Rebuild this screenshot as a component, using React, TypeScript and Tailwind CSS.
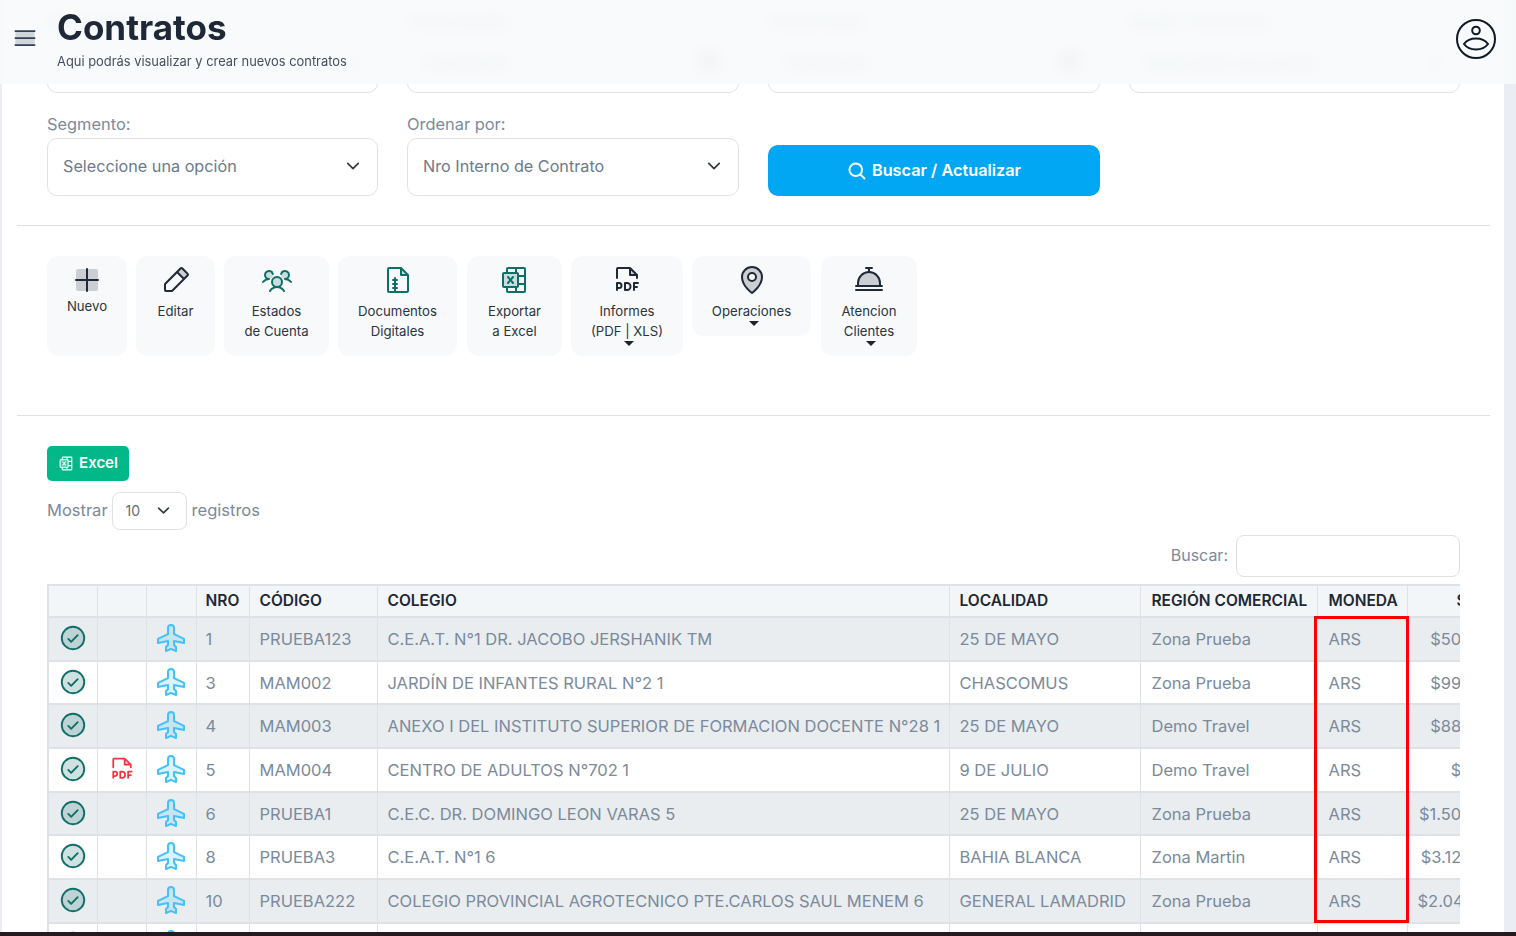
import {
  PiAirplaneDuotone,
  PiCalendarBlankDuotone,
  PiCallBellDuotone,
  PiCheckCircleDuotone,
  PiFileArchiveDuotone,
  PiFilePdfDuotone,
  PiListDuotone,
  PiMagnifyingGlassBold,
  PiMapPinDuotone,
  PiMicrosoftExcelLogoDuotone,
  PiPencilSimpleDuotone,
  PiPlusDuotone,
  PiUsersThreeDuotone,
} from "react-icons/pi";

const rows = [
  { nro: "1", codigo: "PRUEBA123", colegio: "C.E.A.T. N°1 DR. JACOBO JERSHANIK TM", localidad: "25 DE MAYO", region: "Zona Prueba", monto: "$500.000,00" },
  { nro: "3", codigo: "MAM002", colegio: "JARDÍN DE INFANTES RURAL N°2 1", localidad: "CHASCOMUS", region: "Zona Prueba", monto: "$990.000,00" },
  { nro: "4", codigo: "MAM003", colegio: "ANEXO I DEL INSTITUTO SUPERIOR DE FORMACION DOCENTE N°28 1", localidad: "25 DE MAYO", region: "Demo Travel", monto: "$880.000,00" },
  { nro: "5", codigo: "MAM004", colegio: "CENTRO DE ADULTOS N°702 1", localidad: "9 DE JULIO", region: "Demo Travel", monto: "$9.000,00", pdf: true },
  { nro: "6", codigo: "PRUEBA1", colegio: "C.E.C. DR. DOMINGO LEON VARAS 5", localidad: "25 DE MAYO", region: "Zona Prueba", monto: "$1.500.000,00" },
  { nro: "8", codigo: "PRUEBA3", colegio: "C.E.A.T. N°1 6", localidad: "BAHIA BLANCA", region: "Zona Martin", monto: "$3.120.000,00" },
  { nro: "10", codigo: "PRUEBA222", colegio: "COLEGIO PROVINCIAL AGROTECNICO PTE.CARLOS SAUL MENEM 6", localidad: "GENERAL LAMADRID", region: "Zona Prueba", monto: "$2.040.000,00" },
  { nro: "12", codigo: "PRUEBA5", colegio: "ESCUELA DE EDUCACION MEDIA 2", localidad: "25 DE MAYO", region: "Zona Prueba", monto: "$700.000,00" },
];

function Chevron({ className }: { className: string }) {
  return (
    <svg viewBox="0 0 16 16" fill="none" stroke="#343a40" strokeWidth="2" strokeLinecap="round" strokeLinejoin="round" className={className}>
      <path d="M2 5l6 6 6-6" />
    </svg>
  );
}

function Filter({ label, value, calendar }: { label: string; value: string; calendar?: boolean }) {
  return (
    <div>
      <label className="block h-[26px] text-[16.400px] leading-[24px] text-[#7b8a9b]">{label}</label>
      <div className="flex h-[58px] items-center justify-between rounded-[10px] border border-[#dee2e6] bg-white pb-[2px] pl-[15px] pr-[17px] text-[16.200px] text-[#6c7a8b]">
        <span>{value}</span>
        {calendar ? <PiCalendarBlankDuotone className="h-[24px] w-[24px] text-[#1f2937]" /> : <Chevron className="h-[14px] w-[14px]" />}
      </div>
    </div>
  );
}

function Caret({ className }: { className: string }) {
  return <span className={`h-0 w-0 border-x-[5px] border-t-[5px] border-x-transparent border-t-[#212529] ${className}`} />;
}

function ToolButton({ icon, lines, className, labelClass = "mt-[5px]", caret }: { icon: React.ReactNode; lines: string[]; className: string; labelClass?: string; caret?: boolean }) {
  return (
    <div className={`relative flex flex-col items-center rounded-[12px] bg-[#f7f9fb] pt-[8px] text-center text-[13.200px] leading-[20px] text-[#2b3440] ${className}`}>
      <div className="h-[32px] w-[32px] text-[32px]">{icon}</div>
      <div className={labelClass}>
        {lines.map((line) => (
          <div key={line}>{line}</div>
        ))}
      </div>
      {caret && <Caret className="absolute bottom-[10px] left-[calc(50%+2px)] -translate-x-1/2" />}
    </div>
  );
}

export default function App() {
  return (
    <div className="relative flex h-[936px] w-[1516px] flex-col overflow-hidden bg-[#eaeef4] font-['Inter',sans-serif]">
      <header className="absolute left-0 top-0 z-10 flex h-[84px] w-full items-start bg-[#f7f9fb]/90 backdrop-blur-[7px]">
        <PiListDuotone className="ml-[11px] mt-[24px] h-[28px] w-[28px] text-[#334155]" />
        <div className="ml-[18px] flex-1">
          <h1 className="mt-[6px] text-[35px] font-bold leading-[42px] text-[#1e2836]">Contratos</h1>
          <p className="mt-[5px] text-[12.900px] leading-[18px] text-[#46505e]">Aqui podrás visualizar y crear nuevos contratos</p>
        </div>
        <svg viewBox="0 0 40 40" fill="none" stroke="#111827" strokeWidth="2" className="mr-[20px] mt-[19px] h-[40px] w-[40px]">
          <circle cx="20" cy="20" r="19" />
          <circle cx="20" cy="11.500" r="3.800" />
          <path d="M8 25c3-4 7.500-5.500 12-5.500s9 1.500 12 5.500c-3 4-7.500 5.500-12 5.500s-9-1.500-12-5.500z" />
        </svg>
      </header>

      <main className="ml-[2px] w-[1502px] flex-1 overflow-hidden bg-white pl-[15px] pr-[14px] pt-[9px]">
        <div className="px-[30px]">
          <div className="grid grid-cols-[331px_332px_332px_331px] gap-x-[29px] gap-y-[19px]">
            <Filter label="Nro. de Contrato:" value="" />
            <Filter label="Fecha desde:" value="01/01/2024" calendar />
            <Filter label="Fecha hasta:" value="31/12/2024" calendar />
            <Filter label="Región Comercial:" value="Seleccione una opción" />
            <Filter label="Segmento:" value="Seleccione una opción" />
            <Filter label="Ordenar por:" value="Nro Interno de Contrato" />
            <div className="flex items-end">
              <button className="flex h-[51px] w-full items-center justify-center gap-[5px] rounded-[10px] bg-[#02a7f3] text-[16.300px] font-semibold text-white">
                <PiMagnifyingGlassBold className="h-[20px] w-[20px]" />
                Buscar / Actualizar
              </button>
            </div>
          </div>
        </div>

        <hr className="mt-[29px] border-[#dee2e6]" />

        <div className="mt-[30px] flex h-[100px] items-start gap-[9px] px-[30px]">
          <ToolButton className="h-[100px] w-[80px]" labelClass="mt-0" lines={["Nuevo"]} icon={<PiPlusDuotone className="text-[#1f2937]" />} />
          <ToolButton className="h-[100px] w-[79px]" lines={["Editar"]} icon={<PiPencilSimpleDuotone className="text-[#1f2937]" />} />
          <ToolButton className="h-[100px] w-[105px]" lines={["Estados", "de Cuenta"]} icon={<PiUsersThreeDuotone className="text-[#0f6f67]" />} />
          <ToolButton className="h-[100px] w-[119px]" lines={["Documentos", "Digitales"]} icon={<PiFileArchiveDuotone className="text-[#0f6f67]" />} />
          <ToolButton className="ml-[1px] h-[100px] w-[95px]" lines={["Exportar", "a Excel"]} icon={<PiMicrosoftExcelLogoDuotone className="text-[#0f6f67]" />} />
          <ToolButton className="h-[100px] w-[112px]" lines={["Informes", "(PDF | XLS)"]} caret icon={<PiFilePdfDuotone className="text-[#1f2937]" />} />
          <ToolButton className="h-[80px] w-[119px]" lines={["Operaciones"]} caret icon={<PiMapPinDuotone className="text-[#1f2937]" />} />
          <ToolButton className="ml-[1px] h-[100px] w-[96px]" lines={["Atencion", "Clientes"]} caret icon={<PiCallBellDuotone className="text-[#1f2937]" />} />
        </div>

        <hr className="mt-[59px] border-[#dee2e6]" />

        <div className="px-[30px]">
          <button className="mt-[30px] flex h-[35px] w-[82px] items-center justify-center gap-[4px] rounded-[5px] bg-[#03b888] text-[15px] font-semibold text-white">
            <PiMicrosoftExcelLogoDuotone className="h-[17px] w-[17px]" />
            Excel
          </button>

          <div className="mt-[11px] flex h-[38px] items-center text-[16.500px] text-[#7b8a9b]">
            <span className="pb-[1px]">Mostrar</span>
            <div className="ml-[4px] mr-[5px] flex h-[38px] w-[75px] items-center justify-between rounded-[8px] border border-[#dee2e6] pb-[2px] pl-[13px] pr-[16px] text-[14px] text-[#5f6d7e]">
              <span>10</span>
              <Chevron className="h-[13px] w-[13px]" />
            </div>
            <span className="pb-[1px]">registros</span>
          </div>

          <div className="mt-[5px] flex h-[42px] items-center justify-end gap-[8px] text-[16px] text-[#7b8a9b]">
            <span className="pb-[2px]">Buscar:</span>
            <div className="h-[42px] w-[224px] rounded-[8px] border border-[#dee2e6] bg-white" />
          </div>

          <div className="relative mt-[7px] overflow-hidden">
            <table className="w-[1494px] table-fixed border-collapse text-[16.500px] text-[#7b8a9b]">
              <colgroup>
                <col className="w-[49px]" />
                <col className="w-[49px]" />
                <col className="w-[50px]" />
                <col className="w-[53px]" />
                <col className="w-[128px]" />
                <col className="w-[572px]" />
                <col className="w-[191px]" />
                <col className="w-[177px]" />
                <col className="w-[90px]" />
                <col className="w-[135px]" />
              </colgroup>
              <thead>
                <tr className="h-[32px] whitespace-nowrap bg-[#f3f6f9] text-left text-[15.500px] text-[#1e2836]">
                  <th className="border border-b-2 border-l-2 border-t-2 border-[#dee2e6]" />
                  <th className="border border-b-2 border-t-2 border-[#dee2e6]" />
                  <th className="border border-b-2 border-t-2 border-[#dee2e6]" />
                  <th className="border border-b-2 border-t-2 border-[#dee2e6] px-[9px] font-semibold">NRO</th>
                  <th className="border border-b-2 border-t-2 border-[#dee2e6] px-[10px] font-semibold">CÓDIGO</th>
                  <th className="border border-b-2 border-t-2 border-[#dee2e6] px-[10px] font-semibold">COLEGIO</th>
                  <th className="border border-b-2 border-t-2 border-[#dee2e6] px-[10px] font-semibold">LOCALIDAD</th>
                  <th className="border border-b-2 border-t-2 border-[#dee2e6] pl-[11px] pr-[8px] font-semibold">REGIÓN COMERCIAL</th>
                  <th className="border border-b-2 border-t-2 border-[#dee2e6] px-[11px] font-semibold">MONEDA</th>
                  <th className="border border-b-2 border-t-2 border-[#dee2e6] pl-[10px] pr-[4px] text-right font-semibold">SUBTOTAL</th>
                </tr>
              </thead>
              <tbody>
                {rows.map((row, index) => (
                  <tr key={row.nro} className={index % 2 === 0 ? "h-[43.700px] bg-[#e9edf0]" : "h-[43.700px] bg-white"}>
                    <td className="border border-b-2 border-l-2 border-[#dee2e6] pb-[2px] text-center">
                      <PiCheckCircleDuotone className="mx-auto h-[30px] w-[30px] text-[#0f6f67]" />
                    </td>
                    <td className="border border-b-2 border-[#dee2e6] pb-[2px] text-center">
                      {row.pdf && <PiFilePdfDuotone className="mx-auto h-[28px] w-[28px] text-[#ef3340]" />}
                    </td>
                    <td className="border border-b-2 border-[#dee2e6] pb-[2px] text-center">
                      <PiAirplaneDuotone className="mx-auto h-[32px] w-[32px] text-[#45c1f7]" />
                    </td>
                    <td className="border border-b-2 border-[#dee2e6] px-[9px] pt-[1px]">{row.nro}</td>
                    <td className="border border-b-2 border-[#dee2e6] px-[10px] pt-[1px]">{row.codigo}</td>
                    <td className="overflow-hidden whitespace-nowrap border border-b-2 border-[#dee2e6] px-[10px] pt-[1px]">{row.colegio}</td>
                    <td className="border border-b-2 border-[#dee2e6] px-[10px] pt-[1px]">{row.localidad}</td>
                    <td className="border border-b-2 border-[#dee2e6] pl-[11px] pr-[8px] pt-[1px]">{row.region}</td>
                    <td className="border border-b-2 border-[#dee2e6] px-[11px] pt-[1px]">ARS</td>
                    <td className="border border-b-2 border-[#dee2e6] px-[10px] pt-[1px] text-right">{row.monto}</td>
                  </tr>
                ))}
              </tbody>
            </table>
            <div className="absolute left-[1267px] top-[32px] h-[307px] w-[95px] border-[3px] border-[#ff0000]" />
          </div>
        </div>
      </main>

      <div className="absolute bottom-0 left-0 h-[4px] w-full bg-[#241a1f]" />
    </div>
  );
}
